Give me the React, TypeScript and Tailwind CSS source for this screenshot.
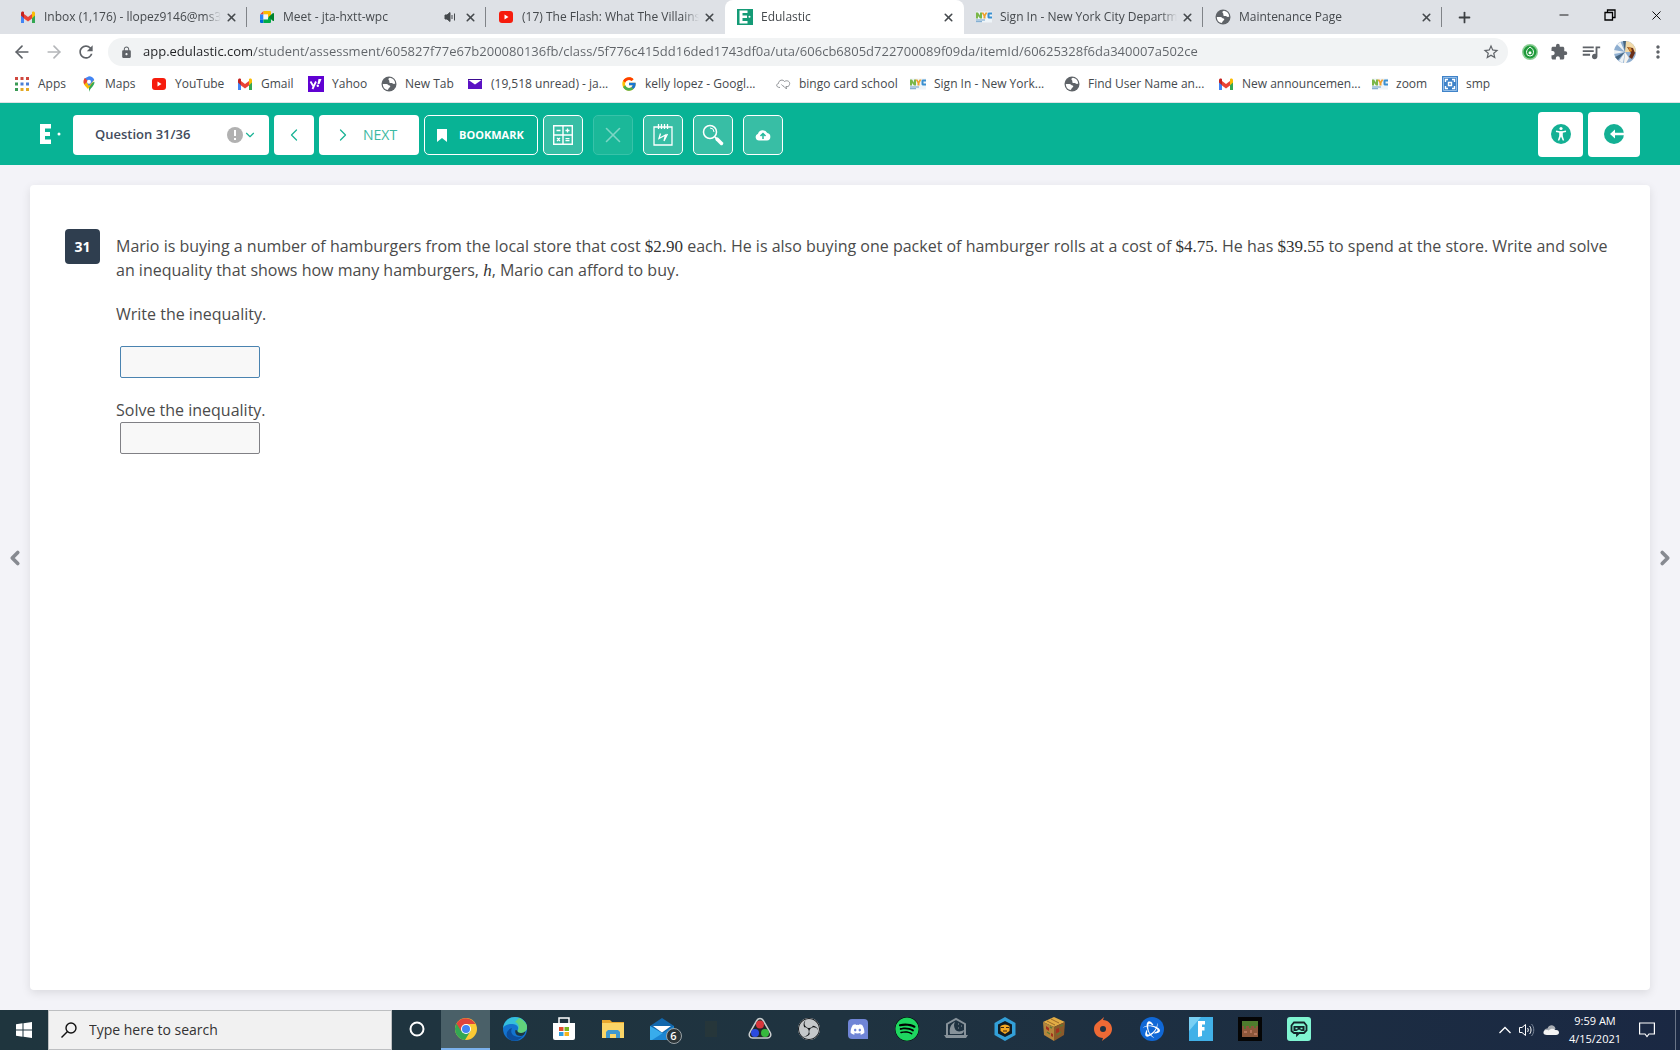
import { useState, type ReactNode } from "react";
import { ArrowLeft, ArrowRight, ChevronDown, ChevronLeft, ChevronRight, Minus, Plus, X } from "lucide-react";
import { FcGoogle } from "react-icons/fc";
import { FaDiscord, FaSpotify } from "react-icons/fa";
import { MdExtension, MdLock, MdMoreVert, MdQueueMusic, MdRefresh, MdStarBorder } from "react-icons/md";
import { SiBattledotnet, SiObsstudio } from "react-icons/si";

/* ---------- site icons ---------- */

const GmailIcon = () => (
  <svg viewBox="0 0 16 12" className="h-3 w-4 shrink-0">
    <path d="M1 12V2l3 2.500V12z" fill="#4285f4" />
    <path d="M12 12V4.500L15 2v10z" fill="#34a853" />
    <path d="M4 7.500V3l4 3 4-3v4.500L8 10.500z" fill="#ea4335" />
    <path d="M1 4.500V2.200C1 .6 2.600 0 3.600.8L4 1.200v6z" fill="#c5221f" />
    <path d="M12 7.200v-6l.4-.4C13.400 0 15 .6 15 2.200v2.300z" fill="#fbbc04" />
  </svg>
);

const MeetIcon = () => (
  <svg viewBox="0 0 16 14" className="h-3.5 w-4 shrink-0">
    <path d="M1 4.500L4.500 1v3.500z" fill="#ea4335" />
    <path d="M4.500 1H11a1 1 0 0 1 1 1v4L9 7.500v-3H4.500z" fill="#fbbc04" />
    <path d="M1 4.500h3.500v5H1z" fill="#2684fc" />
    <path d="M1 9.500h3.500V13H2a1 1 0 0 1-1-1z" fill="#0066da" />
    <path d="M4.500 4.500H9v5H4.500z" fill="#f4f6f8" />
    <path d="M4.500 9.500H9v-2l3-1v5.500a1 1 0 0 1-1 1H4.500z" fill="#00ac47" />
    <path d="M9.500 7L14 3c.5-.3 1 0 1 .5v7c0 .5-.5.8-1 .5z" fill="#00832d" />
  </svg>
);

const YoutubeIcon = () => (
  <svg viewBox="0 0 16 12" className="h-3 w-4 shrink-0">
    <rect x="1" width="14" height="12" rx="3" fill="#f61c0d" />
    <path d="M6.500 3.500L10.500 6l-4 2.500z" fill="#fff" />
  </svg>
);

const NycIcon = () => (
  <svg viewBox="0 0 16 11" className="h-3 w-4 shrink-0">
    <rect width="16" height="11" fill="#eef4f8" />
    <path d="M0 7V1h2l2 3V1h2v6H4L2 4.500V7z" fill="#7ab648" />
    <path d="M5.500 1h2l1 2 1-2h2L9.500 4.500V7h-2V4.500z" fill="#f0a02c" />
    <path d="M16 1v2h-2.500v2H16v2h-3.500l-1-1V2l1-1z" fill="#3a8fd0" />
    <path d="M0 8.500h9M0 10.200h6" stroke="#6d9fc9" />
  </svg>
);

const GlobeIcon = () => (
  <svg viewBox="0 0 16 16" className="size-4 shrink-0">
    <circle cx="8" cy="8" r="7.500" fill="#5f6368" />
    <path d="M1.800 8h3.700c1.500 0 1.700 1.500 3 1.500 1 0 1 1.500 0 2s-1 1.800-2 2.600A6.300 6.300 0 0 1 1.800 8z" fill="#fff" />
    <path d="M9 1.800C7 2.500 7 3.500 8 4.200c1 .8-.3 1.800.7 2.600 1 .7 1.500-.3 2.600.5 1 .8 1.700.7 2.900.5A6.300 6.300 0 0 0 9 1.800z" fill="#fff" />
  </svg>
);

const EdulasticIcon = () => (
  <svg viewBox="0 0 16 16" className="size-4 shrink-0">
    <rect width="16" height="16" fill="#149b76" />
    <path d="M2.500 1.500h8v2.500h-5v2.500H10V9H5.500v3h5v2.500h-8z" fill="#fff" />
    <circle cx="12.500" cy="7.800" r="1" fill="#fff" />
  </svg>
);

const AppsIcon = () => (
  <svg viewBox="0 0 14 14" className="mx-px size-3.5 shrink-0">
    {[0, 1, 2].map((c) => (
      <g key={c}>
        <rect x={c * 5.5} y="0" width="3" height="3" fill="#d0483e" />
        <rect x={c * 5.5} y="5.500" width="3" height="3" fill={c === 0 ? "#3a9a55" : "#4a7fd6"} />
        <rect x={c * 5.5} y="11" width="3" height="3" fill={c === 0 ? "#3a9a55" : "#e3a925"} />
      </g>
    ))}
  </svg>
);

const MapsIcon = () => (
  <svg viewBox="0 0 16 16" className="size-4 shrink-0">
    <path d="M8 16c.8-4 5.500-5.500 5.500-10.300L8 8z" fill="#34a853" />
    <path d="M2.500 5.700C2.500 9 5 10.500 7 13l6.300-9z" fill="#fbbc04" />
    <path d="M8 .2a5.500 5.500 0 0 1 5.200 3.600L8 10 3.500 2.500z" fill="#4285f4" />
    <path d="M2.500 5.700c0-1.500.5-2.500 1.400-3.600L7 5 3.300 8.600z" fill="#ea4335" />
    <circle cx="8" cy="5.700" r="2" fill="#fff" />
  </svg>
);

const YahooIcon = () => (
  <svg viewBox="0 0 16 16" className="size-4 shrink-0">
    <rect width="16" height="16" fill="#6001d2" />
    <path d="M2.500 5.500l3 5M8 5.500L4.500 13" stroke="#fff" strokeWidth="1.800" fill="none" />
    <path d="M10.500 3h3l-2 5h-2z" fill="#fff" />
    <circle cx="9.800" cy="9.800" r="1.200" fill="#fff" />
  </svg>
);

const YahooMailIcon = () => (
  <svg viewBox="0 0 16 12" className="h-3 w-4 shrink-0">
    <rect x="1" y="1" width="14" height="10" fill="#5b12c4" />
    <path d="M1.500 2h13L8 6.500z" fill="#fff" />
    <path d="M1 1.500h14" stroke="#3d0b91" />
  </svg>
);

const CloudLineIcon = () => (
  <svg viewBox="0 0 16 12" className="h-3 w-4 shrink-0" fill="none" stroke="#8f9296">
    <path d="M5 9.500C1 9.500.8 6 3.500 5.500 3.500 2 8 1 9.500 3.500c3-2 6 .5 5 3-.3 1.800-2 2.500-3.500 2l.5 2.500-2.500-2.500c-1-.5-2-1-2.500-2" />
  </svg>
);

const SmpIcon = () => (
  <svg viewBox="0 0 16 16" className="size-4 shrink-0">
    <rect width="16" height="16" fill="#3f83c9" />
    <path d="M3.500 6V3.500H6M10 3.500h2.500V6M12.500 10v2.500H10M6 12.500H3.500V10M6.500 6.500h3v3h-3z" stroke="#fff" strokeWidth="1.400" fill="none" />
    <path d="M1.500 1.500h13v13h-13z" stroke="#a9cdf0" strokeWidth=".8" fill="none" />
  </svg>
);

/* ---------- browser chrome ---------- */

const tabs = [
  { title: "Inbox (1,176) - llopez9146@ms34", icon: <GmailIcon /> },
  { title: "Meet - jta-hxtt-wpc", icon: <MeetIcon />, sound: true },
  { title: "(17) The Flash: What The Villains", icon: <YoutubeIcon /> },
  { title: "Edulastic", icon: <EdulasticIcon />, active: true },
  { title: "Sign In - New York City Departme", icon: <NycIcon /> },
  { title: "Maintenance Page", icon: <GlobeIcon /> },
];

const bookmarks = [
  { title: "Apps", icon: <AppsIcon />, width: "w-[67px]" },
  { title: "Maps", icon: <MapsIcon />, width: "w-[70px]" },
  { title: "YouTube", icon: <YoutubeIcon />, width: "w-[86px]" },
  { title: "Gmail", icon: <GmailIcon />, width: "w-[71px]" },
  { title: "Yahoo", icon: <YahooIcon />, width: "w-[73px]" },
  { title: "New Tab", icon: <GlobeIcon />, width: "w-[86px]" },
  { title: "(19,518 unread) - ja...", icon: <YahooMailIcon />, width: "w-[154px]" },
  { title: "kelly lopez - Googl...", icon: <FcGoogle className="size-4 shrink-0" />, width: "w-[154px]" },
  { title: "bingo card school", icon: <CloudLineIcon />, width: "w-[135px]" },
  { title: "Sign In - New York...", icon: <NycIcon />, width: "w-[154px]" },
  { title: "Find User Name an...", icon: <GlobeIcon />, width: "w-[154px]" },
  { title: "New announcemen...", icon: <GmailIcon />, width: "w-[154px]" },
  { title: "zoom", icon: <NycIcon />, width: "w-[70px]" },
  { title: "smp", icon: <SmpIcon />, width: "w-[60px]" },
];

function TabStrip() {
  return (
    <div className="flex h-[34px] bg-[#dee1e6] pl-2">
      {tabs.map((tab, i) => {
        const divider = !tab.active && !tabs[i + 1]?.active;
        return (
          <div
            key={tab.title}
            className={`flex w-[239px] items-center pl-3 ${tab.active ? "rounded-t-lg bg-white" : ""}`}
          >
            <button className="flex min-w-0 flex-1 items-center gap-2 text-left">
              {tab.icon}
              <span className="flex-1 overflow-hidden whitespace-nowrap text-xs text-[#45494d] [mask-image:linear-gradient(to_right,#000_calc(100%-16px),transparent)]">
                {tab.title}
              </span>
            </button>
            {tab.sound && (
              <svg viewBox="0 0 12 12" className="mr-1 size-3" fill="none" stroke="#45494d">
                <path d="M1 4h2l3-2.500v9L3 8H1z" fill="#45494d" />
                <path d="M8 4v4M10.500 2.500v7" />
              </svg>
            )}
            <button aria-label="Close tab" className="mr-2 ml-1">
              <X size={13} strokeWidth={3} className="text-[#45494d]" />
            </button>
            <span className={`h-5 w-px ${divider ? "bg-[#808388]" : "bg-transparent"}`} />
          </div>
        );
      })}
      <button aria-label="New tab" className="px-3.5">
        <Plus size={17} strokeWidth={2.5} className="text-[#3c4043]" />
      </button>
      <div className="ml-auto flex items-center gap-8 pr-4 pb-1 text-black">
        <button aria-label="Minimize"><Minus size={14} strokeWidth={1.5} /></button>
        <button aria-label="Restore">
          <svg viewBox="0 0 14 14" className="size-3.5" fill="none" stroke="currentColor" strokeWidth="1.300">
            <path d="M2 4.500h7.500V12H2zM4.500 4.500V2H12v7.500H9.500" />
          </svg>
        </button>
        <button aria-label="Close window"><X size={15} strokeWidth={1.5} /></button>
      </div>
    </div>
  );
}

function AddressBar() {
  const [url, setUrl] = useState(
    "app.edulastic.com/student/assessment/605827f77e67b200080136fb/class/5f776c415dd16ded1743df0a/uta/606cb6805d722700089f09da/itemId/60625328f6da340007a502ce"
  );
  return (
    <div className="flex h-9 items-center bg-white pl-3 text-[#5f6368]">
      <button aria-label="Back" className="mr-3"><ArrowLeft size={20} /></button>
      <button aria-label="Forward" className="mr-3 text-[#b4b6b9]"><ArrowRight size={20} /></button>
      <button aria-label="Reload" className="mr-3"><MdRefresh size={20} /></button>
      <div className="flex h-7 flex-1 items-center rounded-full bg-[#f1f3f4] pr-2 pl-3">
        <MdLock size={13} />
        <input
          aria-label="Address"
          value={url}
          onChange={(e) => setUrl(e.target.value)}
          className="ml-2.5 flex-1 bg-[linear-gradient(to_right,#202124_110px,#5f6368_110px)] bg-clip-text text-[13px] text-transparent outline-none"
        />
        <button aria-label="Bookmark this page"><MdStarBorder size={18} /></button>
      </div>
      <div className="flex items-center gap-3 pr-3 pl-3.5">
        <svg viewBox="0 0 16 16" className="size-4">
          <circle cx="8" cy="8" r="8" fill="#8ccf95" />
          <circle cx="8" cy="8" r="6.500" fill="#1f9a3a" />
          <path d="M8 3c2.500 1.500 3.500 3 3.500 5.500A3.500 3.500 0 0 1 8 12a3.500 3.500 0 0 1-3.500-3.500C4.500 6 6 4.500 8 3z" fill="none" stroke="#fff" />
          <circle cx="8" cy="8.700" r="1.500" fill="#fff" />
        </svg>
        <MdExtension size={18} />
        <MdQueueMusic size={22} />
        <svg viewBox="0 0 22 22" className="size-[22px]">
          <circle cx="11" cy="11" r="11" fill="#8eaed0" />
          <path d="M11 11L3 3.500 6.500 1zM11 11L0 9v4zM11 11l-6 9 4 2z" fill="#eef3f6" />
          <path d="M11 11L1 16l3 3zM11 11L9 0h4z" fill="#45647f" />
          <path d="M11 11L12 0a11 11 0 0 1 10 11z" fill="#f1d9a8" />
          <path d="M13 6l6 1 2 5-3 6-3-2 2-4z" fill="#6b2f18" />
          <path d="M14 6l3 1 1 3-2 1z" fill="#d98a2b" />
          <path d="M11 11l4 6-3 5h-2z" fill="#f7f4ee" />
        </svg>
        <button aria-label="Menu"><MdMoreVert size={20} /></button>
      </div>
    </div>
  );
}

function BookmarksBar() {
  return (
    <nav aria-label="Bookmarks" className="flex h-[33px] items-center overflow-hidden border-b border-[#dfe2e5] bg-white pb-1 pl-3.5">
      {bookmarks.map((b, i) => (
        <a key={i} href="#" className={`flex shrink-0 items-center gap-2 text-xs whitespace-nowrap text-[#45494d] ${b.width}`}>
          {b.icon}
          {b.title}
        </a>
      ))}
    </nav>
  );
}

/* ---------- assessment player ---------- */

function ToolButton({ label, disabled, children }: { label: string; disabled?: boolean; children: ReactNode }) {
  return (
    <button
      aria-label={label}
      disabled={disabled}
      className="flex size-10 items-center justify-center rounded-[5px] border border-white bg-[#38bea5] text-white disabled:border-[#38c2a9] disabled:bg-[#1bb899] disabled:text-[#7dd6c5]"
    >
      {children}
    </button>
  );
}

function PlayerHeader() {
  return (
    <header className="flex h-[62px] items-center bg-[#08b395] pr-10 pl-[39px]">
      <svg viewBox="0 0 24 20" className="mr-2.5 h-5 w-6 fill-white">
        <path d="M1 0h11v4.500H6V8h5v4H6v3.500h6V20H1z" />
        <circle cx="20" cy="10" r="1.500" />
      </svg>
      <div className="flex items-center gap-[5px] pt-0.5">
        <div className="relative">
          <select aria-label="Question" className="h-10 w-[196px] appearance-none rounded-sm bg-white px-[22px] text-[13px] font-semibold text-[#434b5d]">
            <option>Question 31/36</option>
          </select>
          <div className="pointer-events-none absolute inset-y-0 right-3 flex items-center">
            <svg viewBox="0 0 16 16" className="size-4">
              <circle cx="8" cy="8" r="8" fill="#b1b1b1" />
              <path d="M8 3v6M8 11v2" stroke="#fff" strokeWidth="2" />
            </svg>
            <ChevronDown size={14} strokeWidth={2} className="text-[#1ab395]" />
          </div>
        </div>
        <button aria-label="Previous" className="flex h-10 w-10 items-center justify-center rounded-sm bg-white text-[#1ab395]">
          <ChevronLeft size={20} strokeWidth={1.5} />
        </button>
        <button className="flex h-10 w-[100px] items-center gap-2.5 rounded-sm bg-white pl-3.5 text-sm text-[#3cb9a2]">
          <ChevronRight size={20} strokeWidth={1.5} className="text-[#1ab395]" />
          NEXT
        </button>
        <button className="flex h-10 w-[114px] items-center gap-3 rounded-[5px] border border-white pl-3 text-[11px] font-bold text-white">
          <svg viewBox="0 0 10 13" className="h-[13px] w-2.5 fill-white">
            <path d="M0 0h10v13L5 9l-5 4z" />
          </svg>
          BOOKMARK
        </button>
        <div className="flex gap-2.5">
          <ToolButton label="Calculator">
            <svg viewBox="0 0 20 20" className="size-5" fill="none" stroke="currentColor">
              <path d="M.7.7h18.600v18.600H.7zM10 .7v18.600M.7 10h18.600" strokeWidth="1.400" />
              <path d="M3.500 5.500h4M12.500 5.500h4M14.500 3.500v4M4 13l3 3M7 13l-3 3M12.500 13.700h4M12.500 15.700h4" strokeWidth="1.300" />
            </svg>
          </ToolButton>
          <ToolButton label="Cross out" disabled>
            <X size={26} strokeWidth={1.5} />
          </ToolButton>
          <ToolButton label="Scratchpad">
            <svg viewBox="0 0 20 24" className="h-6 w-5" fill="none" stroke="currentColor" strokeWidth="1.300">
              <path d="M1 4h18v18H1z" />
              <path d="M5.500 1v5M8.500 1v5M11.500 1v5M14.500 1v5" />
              <path d="M7.500 10.500L6 15.500l6.500-3.500-1.500 6 3.500-7" />
            </svg>
          </ToolButton>
          <ToolButton label="Magnifier">
            <svg viewBox="0 0 22 22" className="size-[22px]" fill="none" stroke="currentColor">
              <circle cx="8" cy="8" r="6.500" strokeWidth="1.500" />
              <path d="M8 4A4 4 0 0 1 12 8" />
              <path d="M13 13l1.500 1.500" strokeWidth="1.500" />
              <path d="M15 15l4.500 4.500" strokeWidth="3.500" strokeLinecap="round" />
            </svg>
          </ToolButton>
          <ToolButton label="Upload">
            <svg viewBox="0 0 16 12" className="h-3 w-4">
              <path d="M4 11.500a3.500 3.500 0 0 1-1-6.800A5 5 0 0 1 12.300 4 3.800 3.800 0 0 1 12 11.500z" fill="#fff" />
              <path d="M8 10V5M5.500 7L8 4.500 10.500 7" fill="none" stroke="#25b99d" strokeWidth="1.500" />
            </svg>
          </ToolButton>
        </div>
      </div>
      <div className="ml-auto flex gap-[5px]">
        <button aria-label="Accessibility" className="flex h-[45px] w-[45px] items-center justify-center rounded-sm bg-white">
          <svg viewBox="0 0 20 20" className="size-5">
            <circle cx="10" cy="10" r="10" fill="#14b094" />
            <circle cx="10" cy="4.500" r="1.600" fill="#fff" />
            <path d="M5 7.200l3.500.8h3l3.500-.8" fill="none" stroke="#fff" strokeWidth="1.400" />
            <path d="M8.200 7.500h3.600V12l1.400 4.500h-1.500L10 12.500l-1.700 4H6.800L8.200 12z" fill="#fff" />
          </svg>
        </button>
        <button aria-label="Exit" className="flex h-[45px] w-[52px] items-center justify-center rounded-sm bg-white">
          <svg viewBox="0 0 20 20" className="size-5">
            <circle cx="10" cy="10" r="10" fill="#14b094" />
            <path d="M20 10H8.500" stroke="#fff" strokeWidth="2.500" />
            <path d="M6 10l5-4.500v9z" fill="#fff" />
          </svg>
        </button>
      </div>
    </header>
  );
}

const Num = ({ children }: { children: ReactNode }) => (
  <span className="font-['Liberation_Serif',serif] text-[17px] leading-none text-[#333]">{children}</span>
);

function Question() {
  return (
    <main className="flex flex-1 items-stretch bg-[#f3f3f8] py-5">
      <button aria-label="Previous question" className="flex w-[30px] items-center justify-center pb-15 text-[#878a91]">
        <ChevronLeft size={22} strokeWidth={4} />
      </button>
      <section className="flex flex-1 items-start gap-4 rounded bg-white pt-11 pr-8 pl-[35px] shadow-[0_3px_10px_rgba(0,0,0,0.1)]">
        <span className="flex size-[35px] shrink-0 items-center justify-center rounded-sm bg-[#2f3e4f] text-sm font-bold text-white">31</span>
        <div className="flex-1 pt-[5px] text-base leading-6 text-[#4b4b4b]">
          <p>
            Mario is buying a number of hamburgers from the local store that cost <Num>$2.90</Num> each. He is also
            buying one packet of hamburger rolls at a cost of <Num>$4.75</Num>. He has <Num>$39.55</Num> to spend at the
            store. Write and solve an inequality that shows how many hamburgers,{" "}
            <Num><i>h</i></Num>, Mario can afford to buy.
          </p>
          <label htmlFor="write" className="mt-5 block">Write the inequality.</label>
          <input id="write" className="mt-5 ml-1 block h-8 w-[140px] rounded-xs border border-[#4a83b0] bg-[#f8f8f8] px-2 outline-none" />
          <label htmlFor="solve" className="mt-5 block">Solve the inequality.</label>
          <input id="solve" className="ml-1 block h-8 w-[140px] rounded-xs border border-[#808085] bg-[#f8f8f8] px-2 outline-none" />
        </div>
      </section>
      <button aria-label="Next question" className="flex w-[30px] items-center justify-center pb-15 text-[#878a91]">
        <ChevronRight size={22} strokeWidth={4} />
      </button>
    </main>
  );
}

/* ---------- windows taskbar ---------- */

const taskbarApps: { name: string; icon: ReactNode; active?: boolean }[] = [
  { name: "Cortana", icon: (
    <svg viewBox="0 0 16 16" className="size-4"><circle cx="8" cy="8" r="6.500" fill="none" stroke="#fff" strokeWidth="2" /></svg>
  ) },
  { name: "Chrome", active: true, icon: (
    <svg viewBox="0 0 24 24" className="size-6">
      <circle cx="12" cy="12" r="11" fill="#fbc934" />
      <path d="M12 12L2.500 6.500A11 11 0 0 0 11 23l5.500-9z" fill="#33a753" />
      <path d="M2.500 6.500A11 11 0 0 1 21.500 7H12l-5 7z" fill="#e0443a" />
      <circle cx="12" cy="12" r="5" fill="#fff" />
      <circle cx="12" cy="12" r="4" fill="#4384f3" />
    </svg>
  ) },
  { name: "Edge", icon: (
    <svg viewBox="0 0 24 24" className="size-6">
      <circle cx="12" cy="12" r="12" fill="#1373cf" />
      <path d="M0 11C1 4 6 0 12 0c7 0 12 5 12 10 0 4-3 6-6 6-2.500 0-4-1-3.500-2.500C17 9 12 7 9 7c-4 0-7 1-9 4z" fill="#35bfdc" />
      <path d="M16 1c5 2 8 6 8 9 0 4-3 6-6 6-2.500 0-4-1-3.500-2.500C17 11 16 6 12 5z" fill="#62d37b" />
      <path d="M9 11c-3 6 3 11 11 8-4 5-10 6-14 3s-3-9 3-11z" fill="#0c4d9c" />
      <path d="M14.500 13.500C14 15 15.500 16 18 16c2 0 3.500-.7 4.500-2-.5 3-2 5-5 5-4 0-6-3-5-6z" fill="#1f3740" />
    </svg>
  ) },
  { name: "Store", icon: (
    <svg viewBox="0 0 24 24" className="size-6">
      <path d="M7 6V1h10v5" fill="none" stroke="#fff" strokeWidth="1.500" />
      <path d="M1 6h22v15a2 2 0 0 1-2 2H3a2 2 0 0 1-2-2z" fill="#fff" />
      <path d="M7 10h4.500v4H7z" fill="#e14b2b" /><path d="M12.500 10H17v4h-4.500z" fill="#78b41f" />
      <path d="M7 15h4.500v4H7z" fill="#2e9fe0" /><path d="M12.500 15H17v4h-4.500z" fill="#f6b41c" />
    </svg>
  ) },
  { name: "File Explorer", icon: (
    <svg viewBox="0 0 24 20" className="h-5 w-6">
      <path d="M1 1h8l2 2h12v16H1z" fill="#e9a82e" />
      <path d="M1 4h22v15H1z" fill="#fbd567" />
      <path d="M5 19v-6l2-2h10l2 2v6h-4v-4H9v4z" fill="#3f98cf" />
    </svg>
  ) },
  { name: "Mail", icon: (
    <span className="relative">
      <svg viewBox="0 0 24 22" className="h-[22px] w-6">
        <path d="M0 8l12-8 12 8v14H0z" fill="#1267ac" />
        <path d="M0 8l24 14H0z" fill="#38acec" />
        <path d="M24 8v14H2z" fill="#1b86d3" />
        <path d="M3 8h18l-9 6.500z" fill="#fff" />
      </svg>
      <span className="absolute top-2.5 left-4 flex size-4 items-center justify-center rounded-full border border-[#9aa3a8] bg-[#2b3438] text-[11px] font-semibold text-white">6</span>
    </span>
  ) },
  { name: "Pinned app", icon: <span className="h-4 w-3 bg-[#26363a]" /> },
  { name: "DaVinci", icon: (
    <svg viewBox="0 0 24 24" className="size-6">
      <path d="M12 1.500c1.500 0 2.500.8 3.200 2l7 12c1.500 3-.2 5.500-2.700 5.500h-15C2 21 .3 18.500 1.800 15.500l7-12c.7-1.200 1.700-2 3.200-2z" fill="#20282a" stroke="#c9cdce" strokeWidth="1.500" />
      <circle cx="12" cy="7.500" r="4" fill="#d7363b" />
      <circle cx="7" cy="16" r="4" fill="#2b4be0" />
      <circle cx="17" cy="16" r="4" fill="#36b93d" />
    </svg>
  ) },
  { name: "OBS Studio", icon: <SiObsstudio className="size-[22px] rounded-full bg-[#c5c8ca] text-[#15181b]" /> },
  { name: "Discord", icon: (
    <span className="flex h-5 w-5 items-center justify-center rounded-sm rounded-br-none bg-[#7085d6]"><FaDiscord size={15} className="text-white" /></span>
  ) },
  { name: "Spotify", icon: <FaSpotify className="size-6 rounded-full bg-black text-[#1ed760]" /> },
  { name: "Lunar Client", icon: (
    <svg viewBox="0 0 24 24" className="size-6">
      <path d="M3 18V7l9-5 9 5v11" fill="none" stroke="#87929a" strokeWidth="2" />
      <path d="M11 5c-4 2-6 6-5 12h10c3 0 4-2 4-4-3 2-8 2-9-1-1-2-1.500-5 0-7z" fill="#87929a" />
      <path d="M0 18h24l-2 3H2z" fill="#87929a" />
      <path d="M14 7h1M17 9h1M14 11h1" stroke="#87929a" />
    </svg>
  ) },
  { name: "Badlion", icon: (
    <svg viewBox="0 0 24 24" className="size-6">
      <path d="M12 0l10.500 6v12L12 24 1.500 18V6z" fill="#33a0d8" />
      <path d="M12 4l7 3.500v9L12 20l-7-3.500v-9z" fill="#121b22" />
      <path d="M7.500 9c3-2 6-2 9 0v5L12 17l-4.500-3z" fill="#f3a823" />
      <path d="M8 10.500h3M13 10.500h3M10 14h4" stroke="#3c240c" />
    </svg>
  ) },
  { name: "Minecraft Dungeons", icon: (
    <svg viewBox="0 0 24 24" className="size-6">
      <path d="M12 0l11 5-11 5L1 5z" fill="#e2ac45" />
      <path d="M1 5l11 5v14L2 18z" fill="#b5863c" />
      <path d="M23 5l-11 5v14l10-6z" fill="#8a5a2a" />
      <path d="M4 9l3 2v3l-3-2zM14 12l3-1v4l-3 1zM9 16l2 1v3l-2-1z" fill="#a5301f" />
      <path d="M5 15l3 2M15 18l4-3M18 9l3-1M8 10l2 1" stroke="#5d7a35" strokeWidth="1.500" />
      <path d="M5 4l8 4M9 2l8 4" stroke="#9c6b28" />
    </svg>
  ) },
  { name: "Origin", icon: (
    <svg viewBox="0 0 24 24" className="size-6">
      <path d="M13 0l-1 3c5 0 9 4 9 9 0 6-5 8-10 12l1-3c-5 0-9-4-9-9 0-6 5-7 10-12z" fill="#ee6a35" />
      <circle cx="12" cy="12" r="3" fill="#1e3241" />
    </svg>
  ) },
  { name: "Battle.net", icon: (
    <span className="flex size-6 items-center justify-center rounded-full bg-[#1068d6]"><SiBattledotnet size={17} className="text-white" /></span>
  ) },
  { name: "Fortnite", icon: (
    <svg viewBox="0 0 24 24" className="size-6">
      <rect width="24" height="24" fill="#41b1e8" />
      <path d="M0 0h12L0 14z" fill="#79d0f4" />
      <path d="M9 4h7v3.500h-3V10h2.500v3.500H13V19l-4 1z" fill="#fff" />
    </svg>
  ) },
  { name: "Minecraft", icon: (
    <svg viewBox="0 0 24 24" className="size-6">
      <rect width="24" height="24" fill="#050505" />
      <rect x="4" y="4" width="16" height="16" fill="#8d573b" />
      <path d="M4 4h16v5h-2v2h-2V9h-3v2h-2V9H8v3H6V9H4z" fill="#4f7c2d" />
      <path d="M6 14h3v2H6zM12 13h2v3h-2zM16 16h3v2h-3z" fill="#b5745a" />
    </svg>
  ) },
  { name: "Streamlabs", icon: (
    <svg viewBox="0 0 24 24" className="size-6">
      <rect width="24" height="24" rx="3" fill="#80f5d2" />
      <path d="M7 5.500h10l2.500 3v5L17 16h-5l-2 2v-2H7l-2.500-2V8.500z" fill="none" stroke="#14262b" strokeWidth="1.800" />
      <path d="M6.500 9h11v5h-3L12 12.500 9.500 14h-3z" fill="#14262b" />
      <path d="M8.500 11.500h2M13.500 11.500h2" stroke="#80f5d2" strokeWidth="1.500" />
    </svg>
  ) },
];

function Taskbar() {
  return (
    <footer className="flex h-10 bg-linear-to-r from-[#1f353e] via-[#1f3340] to-[#1a2843]">
      <button aria-label="Start" className="flex w-12 items-center justify-center">
        <svg viewBox="0 0 16 16" className="size-4 fill-white">
          <path d="M0 2.200L6.500 1.300v6.200H0zM7.500 1.200L16 0v7.500H7.500zM0 8.500h6.500v6.200L0 13.800zM7.500 8.500H16V16l-8.500-1.200z" />
        </svg>
      </button>
      <label className="flex w-[344px] items-center gap-3 border border-[#bdbfc1] bg-[#f1f1f1] pl-3">
        <svg viewBox="0 0 16 16" className="size-4" fill="none" stroke="#111" strokeWidth="1.400">
          <circle cx="10" cy="6" r="5" />
          <path d="M6.500 9.500L.5 15.500" />
        </svg>
        <input aria-label="Search" placeholder="Type here to search" className="w-60 bg-transparent text-sm outline-none placeholder:text-[#333]" />
      </label>
      <div className="flex">
        {taskbarApps.map((app) => (
          <button
            key={app.name}
            aria-label={app.name}
            className={`flex w-[49px] items-center justify-center border-b-2 ${app.active ? "border-[#7bb1ec] bg-[#4a6068]" : "border-transparent"}`}
          >
            {app.icon}
          </button>
        ))}
      </div>
      <div className="ml-auto flex items-center gap-2 text-white">
        <svg viewBox="0 0 12 8" className="h-2 w-3" fill="none" stroke="#fff" strokeWidth="1.300"><path d="M.5 7L6 1.500 11.500 7" /></svg>
        <svg viewBox="0 0 16 14" className="h-3.5 w-4" fill="none" stroke="#fff">
          <path d="M.5 4.500H3L6.500 1.500v11L3 9.500H.5zM8.500 5c1 1 1 3 0 4M10.500 3c2 2 2 6 0 8" />
          <path d="M12.500 1c3 3 3 9 0 12" stroke="#7d889a" />
        </svg>
        <svg viewBox="0 0 16 10" className="h-2.5 w-4">
          <path d="M2 8C0 6 2 3 4.500 3.500 6-1 12-.5 12.500 4L8 8z" fill="#a9adb3" />
          <path d="M4 10c-2.500 0-4-1-3.500-3S4 4.500 5.500 5.500C8 3 11 3.500 12 5c3-.5 4 1 4 2.500S15 10 13 10z" fill="#f4f4f4" />
        </svg>
        <div className="w-14 text-center text-[11px] leading-[18px] whitespace-nowrap">
          <div>9:59 AM</div>
          <div>4/15/2021</div>
        </div>
        <button aria-label="Notifications" className="ml-2">
          <svg viewBox="0 0 16 16" className="size-4" fill="none" stroke="#fff" strokeWidth="1.200">
            <path d="M.6 1h14.800v11H10l-2 2.500L6 12H.6z" />
          </svg>
        </button>
        <span className="mr-1 ml-3 h-10 w-px bg-[#6a7487]" />
      </div>
    </footer>
  );
}

export default function App() {
  return (
    <div className="flex min-h-screen flex-col font-['Open_Sans',sans-serif]">
      <TabStrip />
      <AddressBar />
      <BookmarksBar />
      <PlayerHeader />
      <Question />
      <Taskbar />
    </div>
  );
}
